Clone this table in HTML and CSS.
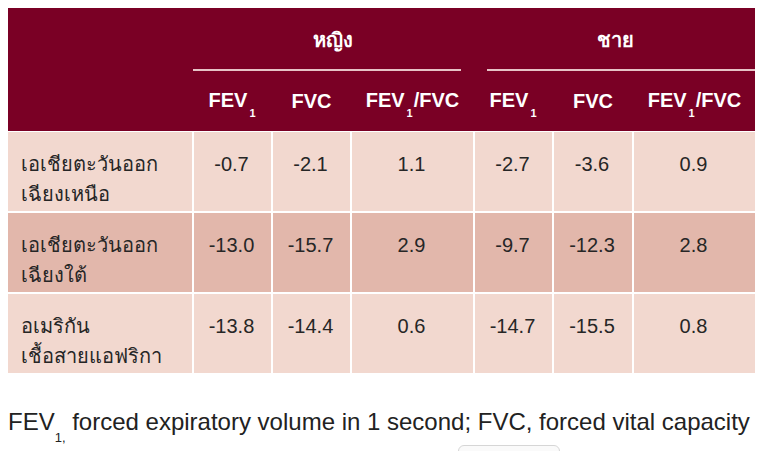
FILE: index.html
```html
<!DOCTYPE html>
<html lang="th">
<head>
<meta charset="utf-8">
<title>FEV1 / FVC</title>
<link rel="stylesheet" href="styles.css">
</head>
<body>
<div class="page">
  <div class="table">
    <div class="head">
      <div class="corner"></div>
      <div class="group group-f">
        <div class="group-label">หญิง</div>
        <div class="rule rule-f"></div>
      </div>
      <div class="group group-m">
        <div class="group-label">ชาย</div>
        <div class="rule rule-m"></div>
      </div>
      <div class="sub-h"><span>FEV<span class="sub">1</span></span></div>
      <div class="sub-h"><span>FVC</span></div>
      <div class="sub-h"><span>FEV<span class="sub">1</span>/FVC</span></div>
      <div class="sub-h"><span>FEV<span class="sub">1</span></span></div>
      <div class="sub-h"><span>FVC</span></div>
      <div class="sub-h"><span>FEV<span class="sub">1</span>/FVC</span></div>
    </div>
    <div class="body">
      <div class="cell name">เอเชียตะวันออก<br>เฉียงเหนือ</div>
      <div class="cell num">-0.7</div>
      <div class="cell num">-2.1</div>
      <div class="cell num">1.1</div>
      <div class="cell num">-2.7</div>
      <div class="cell num">-3.6</div>
      <div class="cell num">0.9</div>

      <div class="cell name alt">เอเชียตะวันออก<br>เฉียงใต้</div>
      <div class="cell num alt">-13.0</div>
      <div class="cell num alt">-15.7</div>
      <div class="cell num alt">2.9</div>
      <div class="cell num alt">-9.7</div>
      <div class="cell num alt">-12.3</div>
      <div class="cell num alt">2.8</div>

      <div class="cell name">อเมริกัน<br>เชื้อสายแอฟริกา</div>
      <div class="cell num">-13.8</div>
      <div class="cell num">-14.4</div>
      <div class="cell num">0.6</div>
      <div class="cell num">-14.7</div>
      <div class="cell num">-15.5</div>
      <div class="cell num">0.8</div>
    </div>
  </div>
  <p class="note">FEV<span class="note-sub">1,</span> forced expiratory volume in 1 second; FVC, forced vital capacity</p>
  <div class="tab-btn"></div>
</div>
</body>
</html>
```
FILE: styles.css
```css
html, body {
  margin: 0;
  padding: 0;
  background: #ffffff;
  overflow: hidden;
}

.page {
  padding: 8px 9px 0 8px;
  font-family: "Liberation Sans", Arial, sans-serif;
  color: #262626;
}

.table {
  width: 747px;
}

.head {
  display: grid;
  grid-template-columns: 184px 77px 77px 121px 77px 78px 121px;
  grid-template-rows: 63px 60px;
  column-gap: 2px;
  background: #7a0025;
  color: #ffffff;
  font-weight: bold;
}

.corner {
  grid-row: 1 / span 2;
}

.group {
  display: flex;
  flex-direction: column;
}

.group-f {
  grid-column: 2 / span 3;
  margin-left: -1px;
}

.group-m {
  grid-column: 5 / span 3;
}

.group-label {
  flex: 1;
  display: flex;
  align-items: center;
  justify-content: center;
  font-size: 20px;
  padding-top: 2px;
}

.rule {
  height: 2px;
  background: #e6c3c6;
}

.rule-f {
  margin-right: 12px;
}

.rule-m {
  margin-left: 12px;
}

.sub-h {
  display: flex;
  align-items: center;
  justify-content: center;
  font-size: 20px;
  line-height: 24px;
  padding-bottom: 1px;
}

.sub {
  font-size: 11px;
  line-height: 0;
  vertical-align: -10px;
  margin: 0 1px 0 2px;
}

.body {
  display: grid;
  grid-template-columns: 184px 77px 77px 121px 77px 78px 121px;
  grid-auto-rows: 79px;
  gap: 2px;
  padding-top: 1px;
  background: #ffffff;
}

.cell {
  background: #f2d8cf;
  font-size: 20px;
  line-height: 30px;
  padding-top: 17px;
}

.cell.alt {
  background: #e2b7ab;
}

.name {
  padding-left: 13px;
}

.num {
  text-align: center;
  padding-right: 2px;
}

.note {
  margin: 35px 0 0 0;
  font-size: 24px;
  line-height: 28px;
  color: #222222;
  white-space: nowrap;
}

.note-sub {
  font-size: 13px;
  line-height: 0;
  vertical-align: -12px;
}

.tab-btn {
  margin: 7px 0 0 450px;
  width: 100px;
  height: 30px;
  border: 1px solid #d6d6d6;
  border-radius: 6px;
  background: #fafafa;
}
```
